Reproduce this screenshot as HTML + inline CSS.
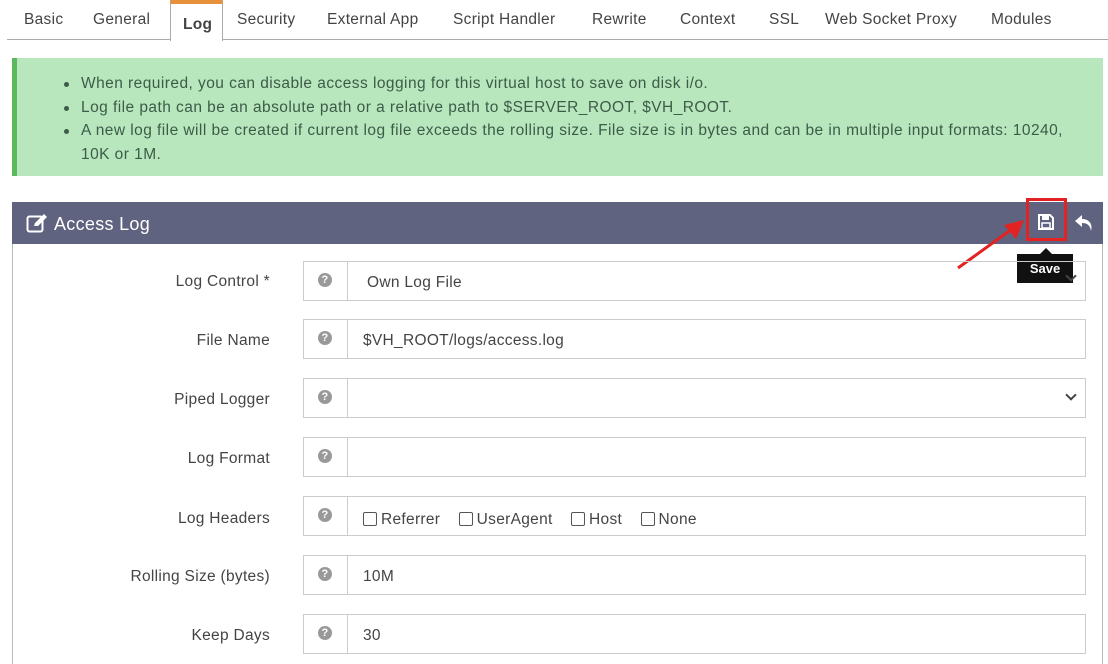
<!DOCTYPE html>
<html><head><style>
*{box-sizing:border-box;margin:0;padding:0}
body{width:1108px;height:655px;overflow:hidden;background:#fff;font-family:"Liberation Sans",sans-serif;color:#333;position:relative;letter-spacing:0.3px}
.tab{position:absolute;top:11px;font-size:15.5px;color:#444}
.tabline{position:absolute;left:7px;right:0;top:39px;height:1px;background:#aaa}
.logtab{position:absolute;left:170px;top:0;width:53px;height:41px;background:#fff;border:1px solid #aaa;border-bottom:none;border-top:4px solid #e8913b}
.logtab span{position:absolute;left:12px;top:12px;font-weight:bold;font-size:15.5px;color:#444}
.alert{position:absolute;left:12px;top:58px;width:1091px;height:118px;background:#b8e6bd;border-left:5px solid #5cb85c;color:#3c5c48;font-size:15.5px;line-height:23.5px;padding:14px 0 0 64px;letter-spacing:0.45px}
.alert li{position:relative;list-style:none;padding-right:8px}
.alert li:before{content:"";position:absolute;left:-17px;top:10px;width:5px;height:5px;border-radius:50%;background:#3c5c48}
.head{position:absolute;left:12px;top:202px;width:1091px;height:42px;background:#5f6380;color:#fff;font-size:18px}
.body{position:absolute;left:12px;top:244px;width:1091px;height:420px;border-left:1px solid #bbb;border-right:1px solid #bbb}
.lbl{position:absolute;right:838px;font-size:15.5px;color:#444;width:250px;text-align:right}
.inp{position:absolute;left:303px;width:783px;height:40px;border:1px solid #ccc;font-size:15.5px;color:#444}
.inp .q{position:absolute;left:0;top:0;width:44px;height:38px;border-right:1px solid #ccc}
.inp .q:after{content:"?";position:absolute;left:14px;top:11px;width:14px;height:14px;border-radius:50%;background:#999;color:#fff;font-size:11px;font-weight:bold;text-align:center;line-height:14px}
.inp .v{position:absolute;left:59px;top:12px}
.cb{display:inline-block;width:14px;height:14px;border:1px solid #555;border-radius:2px;vertical-align:-2px;margin-right:4px}
.chev{position:absolute;right:10px;top:12px;width:8px;height:8px;border-right:2px solid #444;border-bottom:2px solid #444;transform:rotate(45deg)}
</style></head><body>
<div class="tabline"></div>
<div class="tab" style="left:24px">Basic</div>
<div class="tab" style="left:93px">General</div>
<div class="logtab"><span>Log</span></div>
<div class="tab" style="left:237px">Security</div>
<div class="tab" style="left:327px">External App</div>
<div class="tab" style="left:453px">Script Handler</div>
<div class="tab" style="left:592px">Rewrite</div>
<div class="tab" style="left:680px">Context</div>
<div class="tab" style="left:769px">SSL</div>
<div class="tab" style="left:825px">Web Socket Proxy</div>
<div class="tab" style="left:991px">Modules</div>

<div class="alert"><ul>
<li>When required, you can disable access logging for this virtual host to save on disk i/o.</li>
<li>Log file path can be an absolute path or a relative path to $SERVER_ROOT, $VH_ROOT.</li>
<li>A new log file will be created if current log file exceeds the rolling size. File size is in bytes and can be in multiple input formats: 10240, 10K or 1M.</li>
</ul></div>

<div class="head">
<svg style="position:absolute;left:14px;top:11px" width="22" height="20" viewBox="0 0 22 20"><rect x="1.5" y="3.5" width="15" height="15" rx="2" fill="none" stroke="#fff" stroke-width="2"/><path d="M8 13 L9 10 L18 1 L21 4 L12 13 Z" fill="#fff"/></svg>
<span style="position:absolute;left:42px;top:12px">Access Log</span>
<svg style="position:absolute;left:1026px;top:12px" width="16" height="16" viewBox="0 0 16 16"><path d="M1 1h11l3 3v11H1z" fill="none" stroke="#fff" stroke-width="2"/><rect x="4" y="2" width="7" height="4" fill="#fff"/><rect x="4" y="9" width="8" height="5" fill="none" stroke="#fff" stroke-width="1.5"/></svg>
<svg style="position:absolute;left:1062px;top:12px" width="20" height="18" viewBox="0 0 20 18"><path d="M8 1 L1 7 L8 13 V9 C13 9 16 11 17 17 C19 10 15 5 8 5 Z" fill="#fff"/></svg>
</div>
<div style="position:absolute;left:1026px;top:198px;width:41px;height:43px;border:3px solid #e32222"></div>
<div style="position:absolute;left:1017px;top:254px;width:56px;height:29px;background:#111;color:#fff;font-weight:bold;font-size:13px;text-align:center;line-height:29px;letter-spacing:0">Save</div>
<div style="position:absolute;left:1040px;top:248px;width:0;height:0;border:6px solid transparent;border-bottom-color:#111;border-top:none"></div>
<svg style="position:absolute;left:950px;top:215px" width="80" height="60"><line x1="8" y1="53" x2="62" y2="14" stroke="#e32222" stroke-width="3"/><path d="M74 5 L54 10 L66 24 Z" fill="#e32222"/></svg>

<div class="body"></div>

<div class="lbl" style="top:273px">Log Control *</div>
<div class="inp" style="top:261px"><div class="q"></div><div class="v" style="left:63px">Own Log File</div><div class="chev" style="top:10px"></div></div>
<div class="lbl" style="top:332px">File Name</div>
<div class="inp" style="top:319px"><div class="q"></div><div class="v">$VH_ROOT/logs/access.log</div></div>
<div class="lbl" style="top:391px">Piped Logger</div>
<div class="inp" style="top:378px"><div class="q"></div><div class="chev"></div></div>
<div class="lbl" style="top:450px">Log Format</div>
<div class="inp" style="top:437px"><div class="q"></div></div>
<div class="lbl" style="top:510px">Log Headers</div>
<div class="inp" style="top:496px"><div class="q"></div><div class="v" style="top:14px"><span class="cb"></span>Referrer &nbsp;&nbsp; <span class="cb"></span>UserAgent &nbsp;&nbsp; <span class="cb"></span>Host &nbsp;&nbsp; <span class="cb"></span>None</div></div>
<div class="lbl" style="top:568px">Rolling Size (bytes)</div>
<div class="inp" style="top:555px"><div class="q"></div><div class="v">10M</div></div>
<div class="lbl" style="top:627px">Keep Days</div>
<div class="inp" style="top:614px"><div class="q"></div><div class="v">30</div></div>
</body></html>
